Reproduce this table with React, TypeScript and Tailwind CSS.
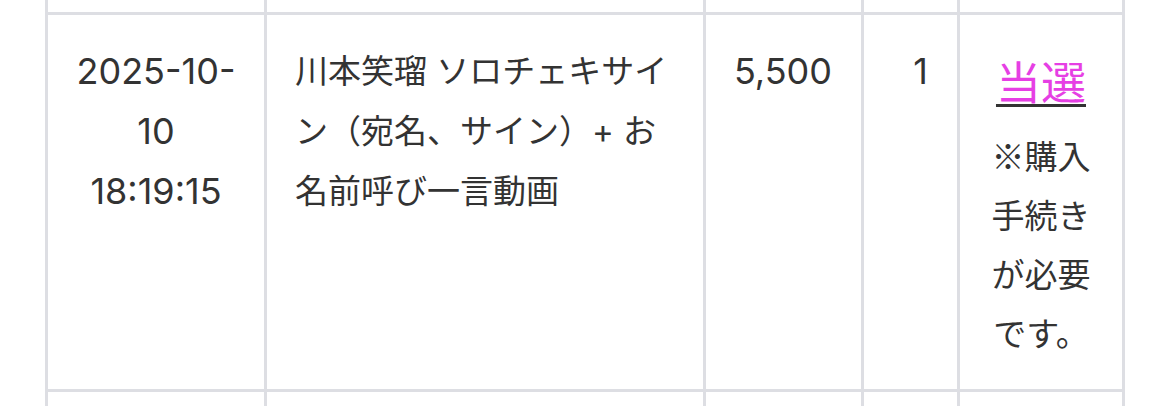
const COLS = "grid grid-cols-[219px_439px_158px_96px_168px]";
const CELL = "border-l-[3px] border-[#dddee3]";
const LAST = "border-x-[3px] border-[#dddee3]";

function EdgeRow({ className }: { className: string }) {
  return (
    <div className={`${COLS} ${className}`}>
      <div className={CELL} />
      <div className={CELL} />
      <div className={CELL} />
      <div className={CELL} />
      <div className={LAST} />
    </div>
  );
}

export default function App() {
  const cell = "border-y-[3px] pt-[26px] text-[33px] leading-[60px] text-[#333]";
  return (
    <div className="h-[406px] w-[1169px] overflow-hidden bg-white pl-[45px] font-['Inter','Noto_Sans_CJK_JP',sans-serif]">
      <div className="w-[1080px]">
        <EdgeRow className="h-[12px]" />
        <div className={`${COLS} h-[380px]`}>
          <div className={`${CELL} ${cell} text-center text-[36px] px-[16px]`}>
            2025-10-
            <br />
            10
            <br />
            18:19:15
          </div>
          <div className={`${CELL} ${cell} pl-[28px] pr-[24px]`}>
            川本笑瑠 ソロチェキサイン（宛名、サイン）+ お名前呼び一言動画
          </div>
          <div className={`${CELL} ${cell} text-right text-[36px] pr-[29px]`}>5,500</div>
          <div className={`${CELL} ${cell} text-right text-[36px] pr-[29px]`}>1</div>
          <div className={`${LAST} ${cell} text-center px-[28px] font-['Noto_Sans_CJK_JP',sans-serif]`}>
            <div className="h-[85px] leading-[80px]">
              <a
                href="#"
                className="text-[45px] underline decoration-[#333] decoration-[3px] underline-offset-[4px]"
              >
                <span className="text-[#e63fe4]">当選</span>
              </a>
            </div>
            <div className="leading-[59px]">
              ※購入
              <br />
              手続き
              <br />
              が必要
              <br />
              です。
            </div>
          </div>
        </div>
        <EdgeRow className="h-[14px]" />
      </div>
    </div>
  );
}
